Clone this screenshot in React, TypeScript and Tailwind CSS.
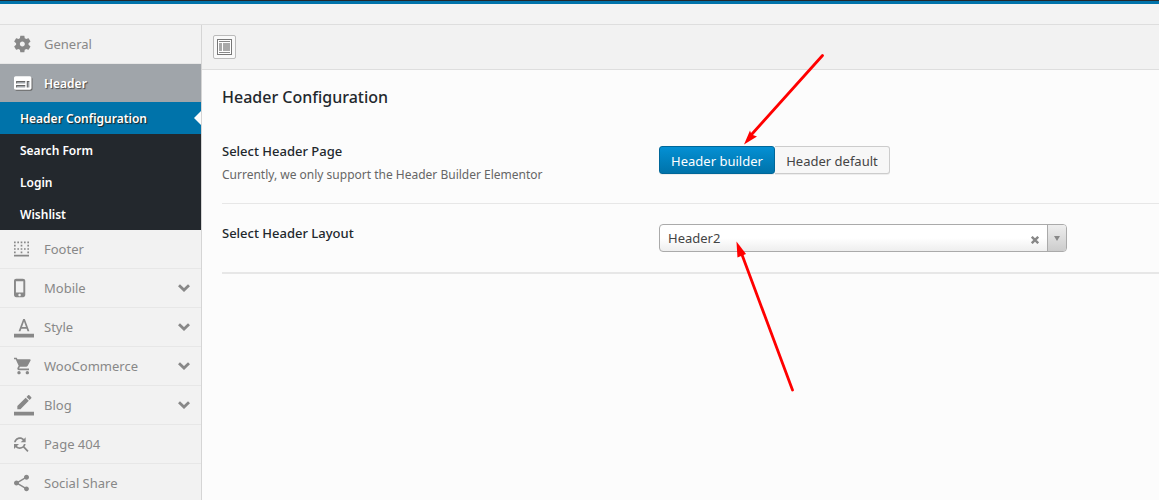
import { useState } from "react";

type Icon = { path: string; left: number };
type MenuItem = { label: string; icon: Icon; expandable?: boolean };

const icons = {
  gear: {
    left: 2,
    path: "M19.43 12.98c.04-.32.07-.64.07-.98s-.03-.66-.07-.98l2.11-1.65c.19-.15.24-.42.12-.64l-2-3.46c-.12-.22-.39-.3-.61-.22l-2.49 1c-.52-.4-1.08-.73-1.69-.98l-.38-2.65C14.46 2.18 14.25 2 14 2h-4c-.25 0-.46.18-.49.42l-.38 2.65c-.61.25-1.17.59-1.69.98l-2.49-1c-.23-.09-.49 0-.61.22l-2 3.46c-.13.22-.07.49.12.64l2.11 1.65c-.04.32-.07.65-.07.98s.03.66.07.98l-2.11 1.65c-.19.15-.24.42-.12.64l2 3.46c.12.22.39.3.61.22l2.49-1c.52.4 1.08.73 1.69.98l.38 2.65c.03.24.24.42.49.42h4c.25 0 .46-.18.49-.42l.38-2.65c.61-.25 1.17-.59 1.69-.98l2.49 1c.23.09.49 0 .61-.22l2-3.46c.12-.22.07-.49-.12-.64l-2.11-1.65zM12 15c-1.66 0-3-1.34-3-3s1.34-3 3-3 3 1.34 3 3-1.34 3-3 3z",
  },
  web: {
    left: 2,
    path: "M21 4H4c-1.1 0-1.99.9-1.99 2L2 18c0 1.1.9 2 2 2h17c1.1 0 2-.9 2-2V6c0-1.1-.9-2-2-2zm-5.5 13.5H4.5v-3h11v3zm0-4.8H4.5V9.7h11v3zm5 4.8h-3.2V9.7h3.2v7.8z",
  },
  borderBottom: {
    left: 3,
    path: "M9 11H7v2h2v-2zm4 4h-2v2h2v-2zM9 3H7v2h2V3zm4 8h-2v2h2v-2zM5 3H3v2h2V3zm8 4h-2v2h2V7zm4 4h-2v2h2v-2zm-4-8h-2v2h2V3zm4 0h-2v2h2V3zm2 10h2v-2h-2v2zm0 4h2v-2h-2v2zM5 7H3v2h2V7zm14-4v2h2V3h-2zm0 6h2V7h-2v2zM5 11H3v2h2v-2zM3 21h18v-2H3v2zm2-6H3v2h2v-2z",
  },
  phone: {
    left: 5,
    path: "M15.5 1h-8C6.12 1 5 2.12 5 3.5v17C5 21.88 6.12 23 7.5 23h8.5c1.38 0 2.5-1.12 2.5-2.5v-17C18.5 2.12 17.38 1 15.5 1zM11.7 22c-.83 0-1.5-.67-1.5-1.5s.67-1.5 1.5-1.5 1.5.67 1.5 1.5-.67 1.5-1.5 1.5zm4.5-4.5H7.3V4h8.9v13.5z",
  },
  textColor: {
    left: 0,
    path: "M0 20h24v4.500H0zM11 2.500L5.500 17h2.250l1.120-3h6.250l1.120 3h2.250L13 2.500h-2zm-1.380 9.500L12 5.500 14.380 12H9.620z",
  },
  cart: {
    left: 1,
    path: "M7 18c-1.1 0-1.99.9-1.99 2S5.9 22 7 22s2-.9 2-2-.9-2-2-2zM1 2v2h2l3.6 7.59-1.35 2.45c-.16.28-.25.61-.25.96 0 1.1.9 2 2 2h12v-2H7.42c-.14 0-.25-.11-.25-.25l.03-.12.9-1.63h7.45c.75 0 1.41-.41 1.75-1.03l3.58-6.49c.08-.14.12-.31.12-.48 0-.55-.45-1-1-1H5.21l-.94-2H1zm16 16c-1.1 0-1.99.9-1.99 2s.89 2 1.99 2 2-.9 2-2-.9-2-2-2z",
  },
  pencil: {
    left: 0,
    path: "M17.75 7L14 3.25l-10 10V17h3.75l10-10zm2.96-2.96c.39-.39.39-1.02 0-1.41L18.37.29c-.39-.39-1.02-.39-1.41 0L15 2.25 18.75 6l1.96-1.96zM0 20h24v4.5H0z",
  },
  findReplace: {
    left: 4,
    path: "M11 6c1.38 0 2.63.56 3.54 1.46L12 10h6V4l-2.05 2.05C14.68 4.78 12.93 4 11 4c-3.53 0-6.43 2.61-6.92 6H6.1c.46-2.28 2.48-4 4.9-4zm5.64 9.14c.66-.9 1.12-1.97 1.28-3.14H15.9c-.46 2.28-2.48 4-4.9 4-1.38 0-2.63-.56-3.54-1.46L10 12H4v6l2.05-2.05C7.32 17.22 9.07 18 11 18c1.55 0 2.98-.51 4.14-1.36L20 21.49 21.49 20l-4.85-4.86z",
  },
  share: {
    left: 3,
    path: "M18 16.08c-.76 0-1.44.3-1.96.77L8.91 12.7c.05-.23.09-.46.09-.7s-.04-.47-.09-.7l7.05-4.11c.54.5 1.25.81 2.04.81 1.66 0 3-1.34 3-3s-1.34-3-3-3-3 1.34-3 3c0 .24.04.47.09.7L8.04 9.81C7.5 9.31 6.79 9 6 9c-1.66 0-3 1.34-3 3s1.34 3 3 3c.79 0 1.5-.31 2.04-.81l7.12 4.16c-.05.21-.08.43-.08.65 0 1.61 1.31 2.92 2.92 2.92 1.61 0 2.92-1.31 2.92-2.92s-1.31-2.92-2.92-2.92z",
  },
};

const lowerItems: MenuItem[] = [
  { label: "Footer", icon: icons.borderBottom },
  { label: "Mobile", icon: icons.phone, expandable: true },
  { label: "Style", icon: icons.textColor, expandable: true },
  { label: "WooCommerce", icon: icons.cart, expandable: true },
  { label: "Blog", icon: icons.pencil, expandable: true },
  { label: "Page 404", icon: icons.findReplace },
  { label: "Social Share", icon: icons.share },
];

const subItems = ["Search Form", "Login", "Wishlist"];

function Glyph({ icon }: { icon: Icon }) {
  return (
    <svg viewBox={`${icon.left} 0 24 24`} className="size-5 shrink-0 overflow-visible fill-current" aria-hidden="true">
      <path d={icon.path} />
    </svg>
  );
}

function MenuLink({ item }: { item: MenuItem }) {
  return (
    <li>
      <a
        href="#"
        className="flex h-[39px] items-center gap-[10px] border-b border-[#e7e7e7] pr-[11px] pl-[14px] text-[#888]"
      >
        <Glyph icon={item.icon} />
        <span className="flex-1 pt-0.5">{item.label}</span>
        {item.expandable && (
          <svg viewBox="0 0 12 8" className="h-2 w-3 shrink-0" fill="none" stroke="currentColor" strokeWidth="2.8" aria-hidden="true">
            <path d="M1 1.2 6 6l5-4.8" />
          </svg>
        )}
      </a>
    </li>
  );
}

function Sidebar() {
  return (
    <nav className="w-[202px] shrink-0 border-r border-[#d5d5d5] bg-[#f2f2f2] text-[13px]">
      <ul>
        <MenuLink item={{ label: "General", icon: icons.gear }} />
        <li>
          <a
            href="#"
            className="flex h-[38px] items-center gap-[10px] bg-[#a0a5aa] pl-[14px] text-[12px] font-semibold text-white text-shadow-[1px_1px_1px_#444]"
          >
            <span className="flex drop-shadow-[1px_1px_0_#666]">
              <Glyph icon={icons.web} />
            </span>
            <span className="pt-0.5">Header</span>
          </a>
          <ul className="bg-[#23282d] text-[12px] font-semibold text-white">
            <li>
              <a
                href="#"
                aria-current="page"
                className="flex h-8 items-center justify-between bg-[#0073aa] pl-5 text-shadow-[1px_1px_1px_#222]"
              >
                <span className="pt-0.5">Header Configuration</span>
                <svg viewBox="0 0 7 14" className="h-[14px] w-[7px] fill-[#fcfcfc]" aria-hidden="true">
                  <path d="M7 0v14L0 7z" />
                </svg>
              </a>
            </li>
            {subItems.map((label) => (
              <li key={label}>
                <a href="#" className="flex h-8 items-center pt-0.5 pl-5">
                  {label}
                </a>
              </li>
            ))}
          </ul>
        </li>
        {lowerItems.map((item) => (
          <MenuLink key={item.label} item={item} />
        ))}
      </ul>
    </nav>
  );
}

function LayoutIcon() {
  return (
    <svg viewBox="0 0 15 16" className="h-4 w-[15px]" aria-hidden="true">
      <rect x="0.5" y="0.5" width="14" height="15" fill="#fff" stroke="#777" />
      <path d="M2 4h3v8H2zM6 4h7v8H6z" fill="#aaa" />
      <path d="M2 2h11v1H2zM2 13h11v1H2z" fill="#888" />
    </svg>
  );
}

function HeaderPageChoice() {
  const [value, setValue] = useState("Header builder");
  return (
    <div role="radiogroup" aria-labelledby="page-title" className="flex">
      {["Header builder", "Header default"].map((label, index) => (
        <label key={label} className="relative">
          <input
            type="radio"
            name="header-page"
            className="peer sr-only"
            checked={value === label}
            onChange={() => setValue(label)}
          />
          <span
            className={`flex h-7 cursor-pointer items-center justify-center border border-[#ccc] bg-[#f7f7f7] pt-[3px] text-[13px] text-[#444] shadow-[0_1px_0_rgba(0,0,0,0.06)] peer-checked:border-[#006799] peer-checked:bg-linear-to-b peer-checked:from-[#0490d4] peer-checked:to-[#0073aa] peer-checked:text-white ${
              index === 0 ? "w-[116px] rounded-[3px]" : "w-[115px] rounded-r-[3px] border-l-0"
            }`}
          >
            {label}
          </span>
        </label>
      ))}
    </div>
  );
}

function LayoutSelect() {
  const [value, setValue] = useState("Header2");
  return (
    <div className="flex h-7 w-[408px] overflow-hidden rounded-[4px] border border-[#aaa] bg-linear-to-b from-white from-50% to-[#eee]">
      <select
        id="header-layout"
        value={value}
        onChange={(event) => setValue(event.target.value)}
        className="min-w-0 flex-1 appearance-none bg-transparent pt-0.5 pl-2 text-[13px] text-[#444] outline-none"
      >
        <option value="" />
        <option>Header1</option>
        <option>Header2</option>
      </select>
      <button type="button" aria-label="Clear" onClick={() => setValue("")} className="flex w-6 items-center justify-center pt-1">
        <svg viewBox="0 0 8 8" className="size-2" stroke="#888" strokeWidth="2.4" aria-hidden="true">
          <path d="M.8.8l6.4 6.4M7.2.8.8 7.2" />
        </svg>
      </button>
      <span className="pointer-events-none flex w-[19px] items-center justify-center border-l border-[#aaa] bg-linear-to-b from-[#eee] to-[#ccc]">
        <svg viewBox="0 0 6 5" className="h-[5px] w-[6px] fill-[#888]" aria-hidden="true">
          <path d="M0 0h6L3 5z" />
        </svg>
      </span>
    </div>
  );
}

/* Red pointers laid over the two settings. */
function Pointers() {
  return (
    <svg className="pointer-events-none absolute top-0 left-0 h-[400px] w-[860px]" viewBox="0 0 860 400" fill="#f00" aria-hidden="true">
      <g stroke="#f00" strokeWidth="2.8" strokeLinecap="round">
        <path d="M822.5 55.5 752 134" />
        <path d="M792.5 390 741 252" />
      </g>
      <path d="M744 144.5 750 130.5 751.5 134.5 757 136.5z" />
      <path d="M736.5 241.5 737.5 257.5 746 254z" />
    </svg>
  );
}

export default function App() {
  return (
    <div className="relative flex h-screen flex-col overflow-hidden bg-[#fcfcfc] font-['Noto_Sans','Open_Sans',sans-serif] text-[#23282d]">
      <div className="h-1 shrink-0 border-b-[3px] border-[#0073aa] bg-[#23282d]" />
      <div className="h-[21px] shrink-0 border-b border-[#dedede] bg-[#f3f3f3]" />
      <div className="flex flex-1">
        <Sidebar />
        <div className="min-w-0 flex-1">
          <div className="flex h-[45px] items-center border-b border-[#dedede] bg-[#f2f2f2] pl-[11px]">
            <button
              type="button"
              aria-label="Expand all options"
              className="flex h-6 w-[23px] items-center justify-center rounded-[2px] border border-[#bbb] bg-[#f9f9f9]"
            >
              <LayoutIcon />
            </button>
          </div>
          <main className="pl-5">
            <h2 className="pt-[15px] text-[16px] leading-6 font-medium">Header Configuration</h2>
            <section className="grid h-[95px] grid-cols-[437px_1fr] border-b border-[#e7e7e7] pt-8">
              <div>
                <h3 id="page-title" className="text-[13px] leading-5 font-medium">
                  Select Header Page
                </h3>
                <p className="mt-1 text-[12px] leading-5 text-[#666]">
                  Currently, we only support the Header Builder Elementor
                </p>
              </div>
              <div className="pt-[5px]">
                <HeaderPageChoice />
              </div>
            </section>
            <section className="grid h-[70px] grid-cols-[437px_1fr] border-b-2 border-[#e7e7e7] pt-[19px]">
              <label htmlFor="header-layout" className="text-[13px] leading-5 font-medium">
                Select Header Layout
              </label>
              <div className="pt-px">
                <LayoutSelect />
              </div>
            </section>
          </main>
        </div>
      </div>
      <Pointers />
    </div>
  );
}
